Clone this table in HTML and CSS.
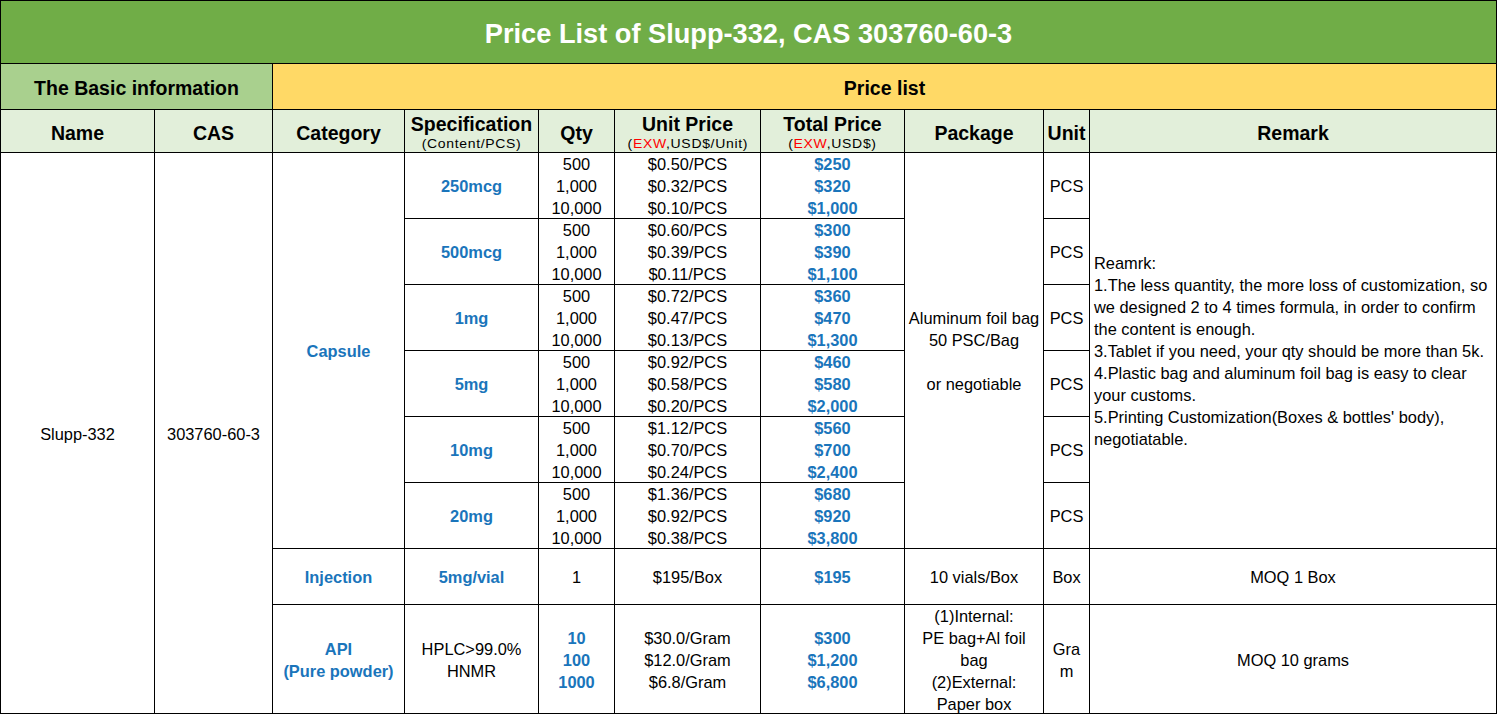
FILE: index.html
```html
<!DOCTYPE html>
<html lang="en">
<head>
<meta charset="utf-8">
<title>Price List of Slupp-332</title>
<link rel="stylesheet" href="styles.css">
</head>
<body>
<div class="sheet">
  <div class="c title">Price List of Slupp-332, CAS 303760-60-3</div>

  <div class="c section basic">The Basic information</div>
  <div class="c section price">Price list</div>

  <div class="c head">Name</div>
  <div class="c head">CAS</div>
  <div class="c head">Category</div>
  <div class="c head two"><span class="main">Specification</span><span class="sub">(Content/PCS)</span></div>
  <div class="c head">Qty</div>
  <div class="c head two"><span class="main">Unit Price</span><span class="sub">(<span class="red">EXW</span>,USD$/Unit)</span></div>
  <div class="c head two"><span class="main">Total Price</span><span class="sub">(<span class="red">EXW</span>,USD$)</span></div>
  <div class="c head">Package</div>
  <div class="c head">Unit</div>
  <div class="c head">Remark</div>

  <div class="c span8">Slupp-332</div>
  <div class="c span8">303760-60-3</div>
  <div class="c span6 blue">Capsule</div>
  <div class="c blue">250mcg</div>
  <div class="c lines">500<br>1,000<br>10,000</div>
  <div class="c lines">$0.50/PCS<br>$0.32/PCS<br>$0.10/PCS</div>
  <div class="c lines blue">$250<br>$320<br>$1,000</div>
  <div class="c span6 lines">Aluminum foil bag<br>50 PSC/Bag<br><br>or negotiable</div>
  <div class="c">PCS</div>
  <div class="c span6 lines remark">Reamrk:<br>1.The less quantity, the more loss of customization, so<br>we designed 2 to 4 times formula, in order to confirm<br>the content is enough.<br>3.Tablet if you need, your qty should be more than 5k.<br>4.Plastic bag and aluminum foil bag is easy to clear<br>your customs.<br>5.Printing Customization(Boxes &amp; bottles' body),<br>negotiatable.</div>

  <div class="c blue">500mcg</div>
  <div class="c lines">500<br>1,000<br>10,000</div>
  <div class="c lines">$0.60/PCS<br>$0.39/PCS<br>$0.11/PCS</div>
  <div class="c lines blue">$300<br>$390<br>$1,100</div>
  <div class="c">PCS</div>

  <div class="c blue">1mg</div>
  <div class="c lines">500<br>1,000<br>10,000</div>
  <div class="c lines">$0.72/PCS<br>$0.47/PCS<br>$0.13/PCS</div>
  <div class="c lines blue">$360<br>$470<br>$1,300</div>
  <div class="c">PCS</div>

  <div class="c blue">5mg</div>
  <div class="c lines">500<br>1,000<br>10,000</div>
  <div class="c lines">$0.92/PCS<br>$0.58/PCS<br>$0.20/PCS</div>
  <div class="c lines blue">$460<br>$580<br>$2,000</div>
  <div class="c">PCS</div>

  <div class="c blue">10mg</div>
  <div class="c lines">500<br>1,000<br>10,000</div>
  <div class="c lines">$1.12/PCS<br>$0.70/PCS<br>$0.24/PCS</div>
  <div class="c lines blue">$560<br>$700<br>$2,400</div>
  <div class="c">PCS</div>

  <div class="c blue">20mg</div>
  <div class="c lines">500<br>1,000<br>10,000</div>
  <div class="c lines">$1.36/PCS<br>$0.92/PCS<br>$0.38/PCS</div>
  <div class="c lines blue">$680<br>$920<br>$3,800</div>
  <div class="c">PCS</div>

  <div class="c blue">Injection</div>
  <div class="c blue">5mg/vial</div>
  <div class="c">1</div>
  <div class="c">$195/Box</div>
  <div class="c blue">$195</div>
  <div class="c">10 vials/Box</div>
  <div class="c">Box</div>
  <div class="c">MOQ 1 Box</div>

  <div class="c lines blue">API<br>(Pure powder)</div>
  <div class="c lines">HPLC&gt;99.0%<br>HNMR</div>
  <div class="c lines blue">10<br>100<br>1000</div>
  <div class="c lines">$30.0/Gram<br>$12.0/Gram<br>$6.8/Gram</div>
  <div class="c lines blue">$300<br>$1,200<br>$6,800</div>
  <div class="c lines">(1)Internal:<br>PE bag+Al foil<br>bag<br>(2)External:<br>Paper box</div>
  <div class="c lines">Gra<br>m</div>
  <div class="c">MOQ 10 grams</div>
</div>
</body>
</html>
```

FILE: styles.css
```css
html, body {
  margin: 0;
  padding: 0;
  background: #ffffff;
}

.sheet {
  display: grid;
  grid-template-columns: 153px 117px 131px 133px 75px 145px 143px 138px 45px 406px;
  grid-template-rows: 62px 45px 42px 65px 65px 65px 65px 65px 65px 55px 108px;
  gap: 1px;
  padding: 1px;
  width: 1497px;
  box-sizing: border-box;
  background: #000000;
  font-family: "Liberation Sans", Arial, sans-serif;
  font-size: 16.4px;
  color: #000000;
}

.c {
  background: #ffffff;
  display: flex;
  flex-direction: column;
  align-items: center;
  justify-content: center;
  text-align: center;
  line-height: 22px;
  white-space: nowrap;
  overflow: visible;
  padding-top: 1px;
  box-sizing: border-box;
}

.title {
  grid-column: 1 / -1;
  background: #70ad47;
  color: #ffffff;
  font-weight: bold;
  font-size: 27.2px;
  padding-top: 4px;
}

.section {
  font-weight: bold;
  font-size: 19.5px;
  padding-top: 3px;
}

.basic {
  grid-column: span 2;
  background: #a9d08e;
}

.price {
  grid-column: span 8;
  background: #ffd966;
}

.head {
  background: #e2efda;
  font-weight: bold;
  font-size: 19.5px;
  padding-top: 4px;
}

.head.two {
  padding-top: 1px;
}

.head .main {
  line-height: 24px;
}

.head .sub {
  font-weight: normal;
  font-size: 12.5px;
  letter-spacing: 0.6px;
  line-height: 16px;
  transform: scaleX(1.12);
}

.red {
  color: #ff0000;
}

.blue {
  color: #1a75bb;
  font-weight: bold;
}

.span8 {
  grid-row: span 8;
}

.span6 {
  grid-row: span 6;
}

.remark {
  align-items: flex-start;
  text-align: left;
  padding-left: 4px;
}
```
